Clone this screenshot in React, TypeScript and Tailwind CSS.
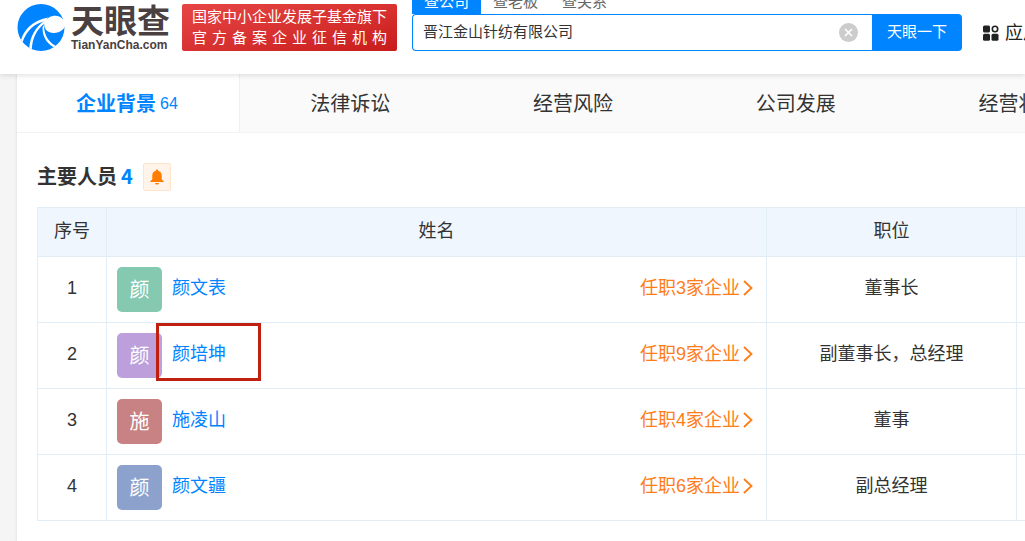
import { useState } from 'react';
import { clsx } from 'clsx';

interface Person {
  id: number;
  name: string;
  avatarClass: string;
  companies: number;
  position: string;
  marked?: boolean;
}

const people: Person[] = [
  { id: 1, name: '颜文表', avatarClass: 'bg-[#84c9b0]', companies: 3, position: '董事长' },
  { id: 2, name: '颜培坤', avatarClass: 'bg-[#bc9fdb]', companies: 9, position: '副董事长，总经理', marked: true },
  { id: 3, name: '施凌山', avatarClass: 'bg-[#c98283]', companies: 4, position: '董事' },
  { id: 4, name: '颜文疆', avatarClass: 'bg-[#8ca2cd]', companies: 6, position: '副总经理' },
];

const searchTabs = ['查公司', '查老板', '查关系'];

const sectionTabs = [
  { label: '企业背景', count: 64 },
  { label: '法律诉讼' },
  { label: '经营风险' },
  { label: '公司发展' },
  { label: '经营状况' },
];

function LogoMark() {
  return (
    <svg className="size-12 shrink-0" viewBox="0 0 48 48" aria-hidden="true">
      <circle cx="24" cy="24.5" r="23.5" fill="#0084ff" />
      {/* eye opening and the gap on the right */}
      <path
        d="M27.5 19C30 14.5 35 12.5 39 12.8C42 13 44.5 14.5 48.5 19L48.5 22.5C46.5 27.5 41.5 30.3 36.5 30C30 29.5 26 25 27.5 19Z"
        fill="#fff"
      />
      {/* swirl streaks */}
      <path d="M4 37C7 27 14.5 18 31 14.5L28.5 18C17 20.5 9.5 28 5.5 39.2Z" fill="#fff" />
      <path d="M12.3 44.8C13 34.5 18 24 28 17.5L27.8 20.5C19.5 26.5 15.5 35 14.8 46.2Z" fill="#fff" />
      <path d="M27 22C27 31 30.5 38 38.5 42.8L36.8 44.2C28.5 40 25 31.5 25.6 24Z" fill="#fff" />
    </svg>
  );
}

function Logo() {
  return (
    <a href="#" className="flex shrink-0 items-center gap-1.5 text-[#4a4041]">
      <LogoMark />
      <span className="flex w-[100px] flex-col pt-0.5">
        <span className="text-[33px] leading-[34px] font-bold">天眼查</span>
        <span className="text-xs leading-3 font-bold">TianYanCha.com</span>
      </span>
    </a>
  );
}

function SearchBox() {
  const [active, setActive] = useState(0);
  const [keyword, setKeyword] = useState('晋江金山针纺有限公司');

  return (
    <form className="ml-[15px] w-[550px] shrink-0" onSubmit={(e) => e.preventDefault()}>
      <div className="flex">
        {searchTabs.map((tab, index) => (
          <button
            key={tab}
            type="button"
            onClick={() => setActive(index)}
            className={clsx(
              'h-[25px] w-[69px] text-[15px] leading-6',
              index === active ? 'bg-[#0084ff] text-white' : 'text-[#666]',
            )}
          >
            {tab}
          </button>
        ))}
      </div>
      <div className="flex h-[37px]">
        <div className="flex flex-1 items-center rounded-l-sm border border-r-0 border-[#0084ff] pr-3.5 pl-2.5">
          <input
            aria-label="搜索企业"
            value={keyword}
            onChange={(e) => setKeyword(e.target.value)}
            className="min-w-0 flex-1 text-[15px] text-[#333] outline-none"
          />
          <button type="button" aria-label="清空" onClick={() => setKeyword('')}>
            <svg className="size-[19px]" viewBox="0 0 19 19">
              <circle cx="9.5" cy="9.5" r="9.5" fill="#ccc" />
              <path d="M6 6L13 13M13 6L6 13" stroke="#fff" strokeWidth="1.6" />
            </svg>
          </button>
        </div>
        <button type="submit" className="w-[90px] rounded-r-sm bg-[#0084ff] text-[15px] text-white">
          天眼一下
        </button>
      </div>
    </form>
  );
}

function Header() {
  return (
    <header className="relative flex h-[74px] items-end bg-white pb-[23px] pl-[17px] shadow-[0_1px_6px_rgba(0,0,0,0.14)]">
      <Logo />
      <div className="ml-[11px] h-[47px] w-[215px] shrink-0 rounded-xs bg-linear-to-br from-[#e64545] to-[#c91a1a] px-2.5 pt-0.5 text-[15px] leading-[21px] text-white">
        <p className="whitespace-nowrap">国家中小企业发展子基金旗下</p>
        <p className="[text-align-last:justify]">官 方 备 案 企 业 征 信 机 构</p>
      </div>
      <SearchBox />
      <a href="#" className="ml-[21px] flex h-[37px] shrink-0 items-center gap-1.5 text-lg text-[#222]">
        <svg className="size-4" viewBox="0 0 16 16" fill="#222" aria-hidden="true">
          <rect x="0" y="0.5" width="7" height="7" rx="1.5" />
          <rect x="0" y="8.7" width="7" height="7" rx="1.5" />
          <rect x="8.5" y="8.7" width="7" height="7" rx="1.5" />
          <circle cx="12" cy="4" r="2.7" fill="none" stroke="#222" strokeWidth="1.6" />
        </svg>
        应用
      </a>
    </header>
  );
}

function SectionTabs() {
  return (
    <nav className="grid grid-cols-5 border-b border-[#f3f3f3]">
      {sectionTabs.map((tab, index) => (
        <a
          key={tab.label}
          href="#"
          className={clsx(
            'flex h-[58px] items-center justify-center gap-1 pt-0.5 pr-0.5 text-xl',
            index === 0 ? 'border-r border-[#f0f0f0] bg-white font-bold text-[#0084ff]' : 'bg-[#fafafa] text-[#333]',
          )}
        >
          {tab.label}
          {tab.count && <span className="text-base font-normal">{tab.count}</span>}
        </a>
      ))}
    </nav>
  );
}

function PersonRow({ person }: { person: Person }) {
  return (
    <tr className="h-[66px]">
      <td className="border border-[#e1edf7] pb-1 text-center">{person.id}</td>
      <td className="border border-[#e1edf7] pr-3 pl-2.5">
        <div className="relative flex items-center">
          <span
            className={clsx(
              'flex size-[45px] items-center justify-center rounded-[5px] text-xl text-white',
              person.avatarClass,
            )}
          >
            {person.name[0]}
          </span>
          <a href="#" className="ml-2.5 pb-1 text-[#0084ff]">
            {person.name}
          </a>
          <a href="#" className="ml-auto flex items-center gap-0.5 pb-1 text-[#ff7d18]">
            任职{person.companies}家企业
            <svg className="h-4 w-3" viewBox="0 0 12 16" fill="none" stroke="currentColor" strokeWidth="1.8" aria-hidden="true">
              <path d="M2 1L9.5 8L2 15" />
            </svg>
          </a>
          {person.marked && (
            <span className="pointer-events-none absolute -top-2.5 left-[39px] h-[58px] w-[105px] border-3 border-[#c0200f]" />
          )}
        </div>
      </td>
      <td className="border border-[#e1edf7] pb-1 text-center">{person.position}</td>
      <td className="border border-[#e1edf7]" />
    </tr>
  );
}

export default function App() {
  return (
    <div className="min-h-screen overflow-hidden bg-[#f5f5f5] font-['Liberation_Sans','Noto_Sans_CJK_SC',sans-serif] text-[#333]">
      <Header />
      <main className="ml-[17px] min-h-[467px] min-w-[1114px] bg-white shadow-[0_0_3px_rgba(0,0,0,0.12)]">
        <SectionTabs />
        <section className="px-5 pt-[29px] pb-5">
          <div className="flex items-center">
            <h2 className="text-xl font-bold">
              主要人员
              <span className="ml-1 font-['Noto_Sans_CJK_SC',sans-serif] text-[#0084ff]">4</span>
            </h2>
            <button
              type="button"
              aria-label="订阅提醒"
              className="ml-2.5 flex size-7 items-center justify-center rounded-xs border border-[#ffe4cc] bg-[#fff3ea]"
            >
              <svg className="size-4" viewBox="0 0 16 16" fill="#ff7d00" aria-hidden="true">
                <path d="M8 0.5C8.7 0.5 9.1 1 9.1 1.7C11.6 2.3 12.7 4.3 12.7 6.6V10.3L14.8 12.4V13H1.2V12.4L3.3 10.3V6.6C3.3 4.3 4.4 2.3 6.9 1.7C6.9 1 7.3 0.5 8 0.5Z" />
                <path d="M6 13.9H10C9.8 15 9 15.6 8 15.6C7 15.6 6.2 15 6 13.9Z" />
              </svg>
            </button>
          </div>
          <table className="mt-4 w-full table-fixed border-collapse text-lg">
            <colgroup>
              <col className="w-[69px]" />
              <col />
              <col className="w-[250px]" />
              <col className="w-[94px]" />
            </colgroup>
            <thead>
              <tr className="h-[49px] bg-[#eff6fd]">
                <th className="border border-[#e1edf7] pb-0.5 font-normal">序号</th>
                <th className="border border-[#e1edf7] pb-0.5 font-normal">姓名</th>
                <th className="border border-[#e1edf7] pb-0.5 font-normal">职位</th>
                <th className="border border-[#e1edf7]" />
              </tr>
            </thead>
            <tbody>
              {people.map((person) => (
                <PersonRow key={person.id} person={person} />
              ))}
            </tbody>
          </table>
        </section>
      </main>
    </div>
  );
}
